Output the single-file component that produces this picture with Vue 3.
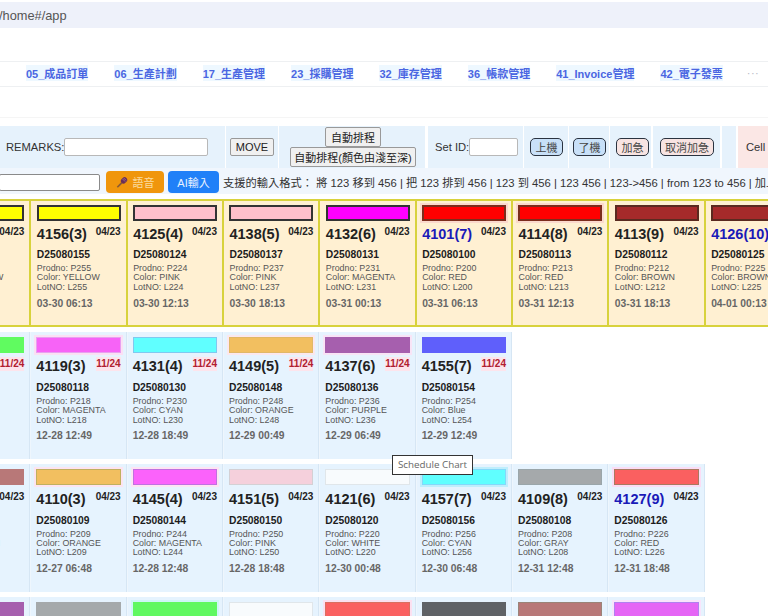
<script setup>
const navItems = ['05_成品訂單','06_生產計劃','17_生產管理','23_採購管理','32_庫存管理','36_帳款管理','41_Invoice管理','42_電子發票']

const c = (no, tag, id, prod, color, time, bar, extra = {}) => ({ no, tag, id, prod, color, lot: prod.replace('P', 'L'), time, bar, ...extra })

const rows = [
  { kind: 'urgent', cards: [
    c('4122(2)','04/23','D25080121','P221','YELLOW','03-30 00:13','#ffff00'),
    c('4156(3)','04/23','D25080155','P255','YELLOW','03-30 06:13','#ffff00'),
    c('4125(4)','04/23','D25080124','P224','PINK','03-30 12:13','#ffc0cb'),
    c('4138(5)','04/23','D25080137','P237','PINK','03-30 18:13','#ffc0cb'),
    c('4132(6)','04/23','D25080131','P231','MAGENTA','03-31 00:13','#ff00ff'),
    c('4101(7)','04/23','D25080100','P200','RED','03-31 06:13','#ff0000',{ vip: true, edge: '#7c2c1c', halo: '#fbd9cc' }),
    c('4114(8)','04/23','D25080113','P213','RED','03-31 12:13','#ff0000',{ edge: '#7c2c1c', halo: '#fbd9cc' }),
    c('4113(9)','04/23','D25080112','P212','BROWN','03-31 18:13','#a52a2a',{ edge: '#5a2a20' }),
    c('4126(10)','04/23','D25080125','P225','BROWN','04-01 00:13','#a52a2a',{ vip: true, edge: '#5a2a20' }),
  ]},
  { kind: 'normal', late: true, cards: [
    c('4129(2)','11/24','D25080128','P228','GREEN','12-28 06:49','#60fb60'),
    c('4119(3)','11/24','D25080118','P218','MAGENTA','12-28 12:49','#f763f7',{ edge: '#e8a0f0', halo: '#fbe0f4' }),
    c('4131(4)','11/24','D25080130','P230','CYAN','12-28 18:49','#60ffff',{ edge: '#80c8f0' }),
    c('4149(5)','11/24','D25080148','P248','ORANGE','12-29 00:49','#f2bf60',{ edge: '#e0b868', halo: '#fbe8ee' }),
    c('4137(6)','11/24','D25080136','P236','PURPLE','12-29 06:49','#a65fae',{ halo: '#f8e4f6' }),
    c('4155(7)','11/24','D25080154','P254','Blue','12-29 12:49','#5f5ffb'),
  ]},
  { kind: 'normal', cards: [
    c('4118(2)','04/23','D25080117','P217','BROWN','12-27 00:48','#b87878'),
    c('4110(3)','04/23','D25080109','P209','ORANGE','12-27 06:48','#f2bf60',{ edge: '#c0b060', halo: '#fde4f0' }),
    c('4145(4)','04/23','D25080144','P244','MAGENTA','12-28 12:48','#fb62fb',{ edge: '#c070e0', halo: '#fde4f4' }),
    c('4151(5)','04/23','D25080150','P250','PINK','12-28 18:48','#f5d0dc',{ edge: '#d4d0d4' }),
    c('4121(6)','04/23','D25080120','P220','WHITE','12-30 00:48','#f8fbfd',{ edge: '#e0e6ea' }),
    c('4157(7)','04/23','D25080156','P256','CYAN','12-30 06:48','#60ffff',{ edge: '#84d8fa', halo: '#bfeefc' }),
    c('4109(8)','04/23','D25080108','P208','GRAY','12-31 12:48','#a5a9ab',{ edge: '#9aa6aa' }),
    c('4127(9)','04/23','D25080126','P226','RED','12-31 18:48','#fa6060',{ vip: true, edge: '#a87a60', halo: '#fbdcf4' }),
  ]},
  { kind: 'normal', cards: [
    c('4136(2)','04/23','D25080135','P235','PURPLE','01-01 00:48','#a65fae'),
    c('4108(3)','04/23','D25080107','P207','GRAY','01-01 06:48','#a5a9ab'),
    c('4128(4)','04/23','D25080127','P227','GREEN','01-01 12:48','#60f860',{ halo: '#cff6f6' }),
    c('4120(5)','04/23','D25080119','P219','WHITE','01-01 18:48','#f8fbfd',{ edge: '#e0e6ea' }),
    c('4126(6)','04/23','D25080125','P225','RED','01-02 00:48','#fa6060',{ edge: '#d87060', halo: '#fbe0f0' }),
    c('4107(7)','04/23','D25080106','P206','GRAY','01-02 06:48','#5f6266'),
    c('4117(8)','04/23','D25080116','P216','BROWN','01-02 12:48','#b87878',{ edge: '#9a8478' }),
    c('4146(9)','04/23','D25080145','P245','MAGENTA','01-02 18:48','#e565f5',{ edge: '#b080f0', halo: '#f8e4fb' }),
  ]},
]

const barStyle = (card) => ({
  background: card.bar,
  borderColor: card.edge,
  boxShadow: card.halo ? `0 0 0 2px ${card.halo}` : undefined,
})
</script>

<template>
  <div class="page">
    <div class="url">/home#/app</div>

    <nav class="nav">
      <a v-for="item in navItems" :key="item" class="nav-item">{{ item }}</a>
      <span class="nav-more">···</span>
    </nav>

    <div class="spacer"></div>

    <div class="toolbar">
      <div class="seg seg-remarks">
        <span>REMARKS:</span>
        <input class="remarks-input" type="text" />
      </div>
      <div class="seg seg-move"><button class="plain">MOVE</button></div>
      <div class="seg seg-auto">
        <button class="plain">自動排程</button>
        <button class="plain">自動排程(顏色由淺至深)</button>
      </div>
      <div class="seg seg-set">
        <span>Set ID:</span>
        <input class="set-input" type="text" />
      </div>
      <div class="seg seg-a"><button class="state blue">上機</button></div>
      <div class="seg seg-b"><button class="state blue">了機</button></div>
      <div class="seg seg-c"><button class="state pink">加急</button></div>
      <div class="seg seg-d"><button class="state pink">取消加急</button></div>
      <div class="seg seg-e"></div>
      <div class="seg seg-cell"><span>Cell</span></div>
    </div>

    <div class="inputbar">
      <input class="cmd-input" type="text" />
      <button class="voice">
        <svg class="mic" viewBox="0 0 16 16" width="12" height="12" aria-hidden="true">
          <path d="M1 14.2 7 8l1.8 1.8-6.2 6z" fill="#8a5a34" />
          <rect x="7.2" y="1.4" width="7" height="9" rx="3.5" transform="rotate(45 10.7 5.9)" fill="#6a2f58" />
          <path d="M8.6 3.8l3.6 3.6M10.2 2.6l3.2 3.2" stroke="#b98aa8" stroke-width=".8" fill="none" />
        </svg>
        <span>語音</span>
      </button>
      <button class="ai">AI輸入</button>
      <span class="hint">支援的輸入格式： 將 123 移到 456 | 把 123 排到 456 | 123 到 456 | 123 456 | 123-&gt;456 | from 123 to 456 | 加上機</span>
    </div>

    <div class="board">
      <div v-for="(row, r) in rows" :key="r" class="row" :class="row.kind">
        <div v-for="card in row.cards" :key="card.id" class="card">
          <div class="bar" :style="barStyle(card)"></div>
          <div class="head">
            <span class="no" :class="{ vip: card.vip }">{{ card.no }}</span>
            <span class="tag" :class="{ late: row.late }">{{ card.tag }}</span>
          </div>
          <div class="id">{{ card.id }}</div>
          <div class="line">Prodno: {{ card.prod }}</div>
          <div class="line">Color: {{ card.color }}</div>
          <div class="line">LotNO: {{ card.lot }}</div>
          <div class="time">{{ card.time }}</div>
        </div>
      </div>
    </div>

    <div class="tooltip">Schedule Chart</div>
  </div>
</template>

<style scoped>
.page {
  position: relative;
  width: 768px;
  height: 616px;
  overflow: hidden;
  background: #fff;
  font-family: "Liberation Sans", "Noto Sans CJK TC", sans-serif;
  color: #222;
}
.url {
  margin-top: 2px;
  height: 26px;
  line-height: 28px;
  background: #eef1fa;
  color: #555;
  font-size: 12.8px;
  text-indent: -1px;
}
.nav {
  margin-top: 33px;
  display: flex;
  align-items: center;
  gap: 26px;
  padding: 0 0 3px 26px;
  box-sizing: content-box;
  height: 21px;
  border-top: 1px solid #eef0f2;
  border-bottom: 1px solid #eef0f2;
}
.nav-item {
  font-size: 11px;
  font-weight: 700;
  color: #4a66e2;
  background: #eef8ff;
  white-space: nowrap;
}
.nav-more {
  margin-left: -2px;
  color: #b4b8c4;
  font-size: 11px;
  letter-spacing: 0.5px;
}
.spacer {
  height: 30px;
  border-bottom: 1px solid #f5f5f5;
  margin-bottom: 8px;
}
.toolbar {
  display: flex;
  height: 42px;
  font-size: 11.2px;
  color: #333;
}
.seg {
  display: flex;
  align-items: center;
  background: #e6f2fc;
  flex: none;
}
.seg-remarks { width: 225px; padding-left: 6px; box-sizing: border-box; margin-right: 1px; }
.seg-move { width: 52px; padding-left: 4px; box-sizing: border-box; margin-right: 1px; }
.seg-auto {
  width: 146px;
  margin-right: 3px;
  flex-direction: column;
  align-items: flex-start;
  justify-content: flex-start;
  padding: 1px 0 0 11px;
  box-sizing: border-box;
}
.seg-auto .plain:first-child { margin-left: 35px; height: 20px; width: 56px; padding: 0; }
.seg-auto .plain:last-child { height: 20px; width: 126px; padding: 0; }
.seg-set { width: 95px; padding-left: 7px; box-sizing: border-box; margin-right: 1px; }
.seg-a { width: 44px; padding-left: 6px; box-sizing: border-box; margin-right: 1px; }
.seg-b { width: 40px; padding-left: 4px; box-sizing: border-box; margin-right: 1px; }
.seg-c { width: 41px; padding-left: 6px; box-sizing: border-box; margin-right: 2px; }
.seg-d { width: 67px; padding-left: 7px; box-sizing: border-box; margin-right: 2px; }
.seg-e { width: 14px; margin-right: 2px; }
.seg-cell { width: 30px; background: #fbe7e5; padding-left: 8px; box-sizing: border-box; }
.remarks-input {
  width: 144px;
  height: 18px;
  box-sizing: border-box;
  border: 1px solid #b8b8b8;
  border-radius: 2px;
  background: #fff;
  padding: 0;
  margin: 0;
}
.set-input {
  width: 49px;
  height: 18px;
  box-sizing: border-box;
  border: 1px solid #b8b8b8;
  border-radius: 2px;
  background: #fff;
  padding: 0;
  margin: 0;
}
.plain {
  height: 18px;
  padding: 0 6px;
  border: 1px solid #999;
  border-radius: 2px;
  background: #f0f0f0;
  color: #222;
  font: 11px "Liberation Sans", "Noto Sans CJK TC", sans-serif;
  white-space: nowrap;
}
.seg-move .plain { width: 44px; padding: 0; }
.state {
  height: 18px;
  padding: 0;
  border: 1.5px solid #2a3340;
  border-radius: 5px;
  color: #444;
  font: 11px "Liberation Sans", "Noto Sans CJK TC", sans-serif;
  white-space: nowrap;
}
.state.blue { background: #c8e0f8; width: 33px; }
.state.pink { background: #f8e4e2; width: 33px; }
.seg-d .state { width: 54px; }
.inputbar {
  height: 26px;
  display: flex;
  align-items: center;
  background: #f0f6fd;
  padding-top: 1px;
  box-sizing: border-box;
  white-space: nowrap;
  overflow: hidden;
}
.cmd-input {
  width: 101px;
  height: 17px;
  margin: 2px 0 0 -1px;
  box-sizing: border-box;
  border: 1px solid #8a8a8a;
  border-radius: 2px;
  background: #fff;
  padding: 0;
  flex: none;
}
.voice {
  margin-left: 6px;
  width: 58px;
  height: 22px;
  border: 0;
  border-radius: 4px;
  background: #f0960c;
  color: #fbdca0;
  display: flex;
  align-items: center;
  justify-content: center;
  gap: 5px;
  padding: 0;
  flex: none;
  font: 11px "Liberation Sans", "Noto Sans CJK TC", sans-serif;
}
.mic { flex: none; }
.ai {
  margin-left: 4px;
  width: 51px;
  height: 22px;
  border: 0;
  border-radius: 4px;
  background: #2080f8;
  color: #e8f2ff;
  padding: 0;
  flex: none;
  font: 11px "Liberation Sans", "Noto Sans CJK TC", sans-serif;
}
.hint {
  margin-left: 4px;
  font-size: 11.25px;
  color: #333;
  flex: none;
}
.board {
  margin-top: 5px;
  display: flex;
  flex-direction: column;
  gap: 5px;
}
.row {
  display: flex;
  margin-left: -66px;
  height: 127.7px;
}
.card {
  flex: none;
  width: 96.33px;
  height: 100%;
  box-sizing: border-box;
  padding: 5px 5px 0 5px;
  overflow: hidden;
}
.row.normal .card {
  background: #e6f3fe;
  border-right: 1px solid #d6e6f4;
  border-left: 1px solid #eef6fd;
}
.row.urgent .card {
  background: #fff0d2;
  border: 2px solid #d8d23c;
  border-right-width: 1px;
  border-left-width: 1.5px;
  padding: 4px 5px 0 5.5px;
}
.bar {
  height: 16px;
  box-sizing: border-box;
  border: 1px solid transparent;
  margin-bottom: 4.3px;
}
.row.urgent .bar {
  border-width: 2px;
  border-color: #333;
  margin-bottom: 4px;
}
.head {
  display: flex;
  justify-content: space-between;
  align-items: flex-start;
  height: 22px;
  line-height: 19px;
}
.no {
  font-size: 14.5px;
  font-weight: 700;
  color: #222;
  white-space: nowrap;
}
.no.vip { color: #1a1ab8; }
.tag {
  font-size: 10px;
  font-weight: 700;
  line-height: 14px;
  color: #222;
}
.tag.late {
  color: #b02030;
  background: #fde4ec;
}
.id {
  margin-top: 2px;
  font-size: 10.3px;
  font-weight: 700;
  line-height: 14px;
  color: #1c1c1c;
}
.row.urgent .id { margin-top: 1px; }
.line {
  font-size: 8.9px;
  line-height: 9.3px;
  color: #555;
  white-space: nowrap;
}
.id + .line { margin-top: 2px; }
.time {
  margin-top: 4px;
  font-size: 10.3px;
  font-weight: 700;
  line-height: 14px;
  color: #666;
  white-space: nowrap;
}
.row.urgent .time { margin-top: 5px; }
.tooltip {
  position: absolute;
  left: 392px;
  top: 455px;
  width: 81px;
  height: 20px;
  box-sizing: border-box;
  border: 1px solid #333;
  background: #fff;
  color: #666;
  font: 9.8px/18px "Open Sans", sans-serif;
  text-align: center;
}
</style>
